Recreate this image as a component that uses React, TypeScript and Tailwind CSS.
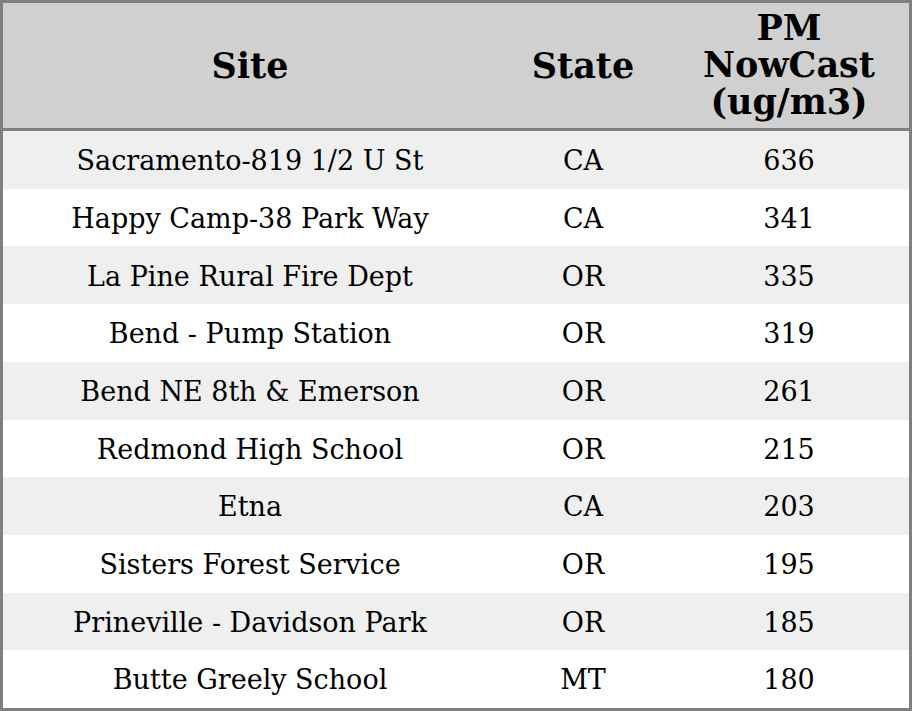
import React from 'react';

const rows: [string, string, string][] = [
  ['Sacramento-819 1/2 U St', 'CA', '636'],
  ['Happy Camp-38 Park Way', 'CA', '341'],
  ['La Pine Rural Fire Dept', 'OR', '335'],
  ['Bend - Pump Station', 'OR', '319'],
  ['Bend NE 8th & Emerson', 'OR', '261'],
  ['Redmond High School', 'OR', '215'],
  ['Etna', 'CA', '203'],
  ['Sisters Forest Service', 'OR', '195'],
  ['Prineville - Davidson Park', 'OR', '185'],
  ['Butte Greely School', 'MT', '180'],
];

const App: React.FC = () => {
  return (
    <div className="w-[912px] h-[711px] bg-white font-['DejaVu_Serif',serif] text-black">
      <div className="h-full border-[3px] border-[#808080] flex flex-col">
        <div className="h-[128px] shrink-0 bg-[#d0d0d0] border-b-[3px] border-[#808080] flex items-center font-bold text-[35px] leading-[37px]">
          <div className="w-[494px] text-center">Site</div>
          <div className="w-[172px] text-center">State</div>
          <div className="flex-1 text-center pb-[3px]">
            PM
            <br />
            NowCast
            <br />
            (ug/m3)
          </div>
        </div>
        <div className="flex-1 flex flex-col text-[27px]">
          {rows.map(([site, state, pm], i) => (
            <div
              key={site}
              className={`flex-1 flex items-center pt-[3px] ${i % 2 === 0 ? 'bg-[#efefef]' : 'bg-white'}`}
            >
              <div className="w-[494px] text-center">{site}</div>
              <div className="w-[172px] text-center">{state}</div>
              <div className="flex-1 text-center">{pm}</div>
            </div>
          ))}
        </div>
      </div>
    </div>
  );
};

export default App;
